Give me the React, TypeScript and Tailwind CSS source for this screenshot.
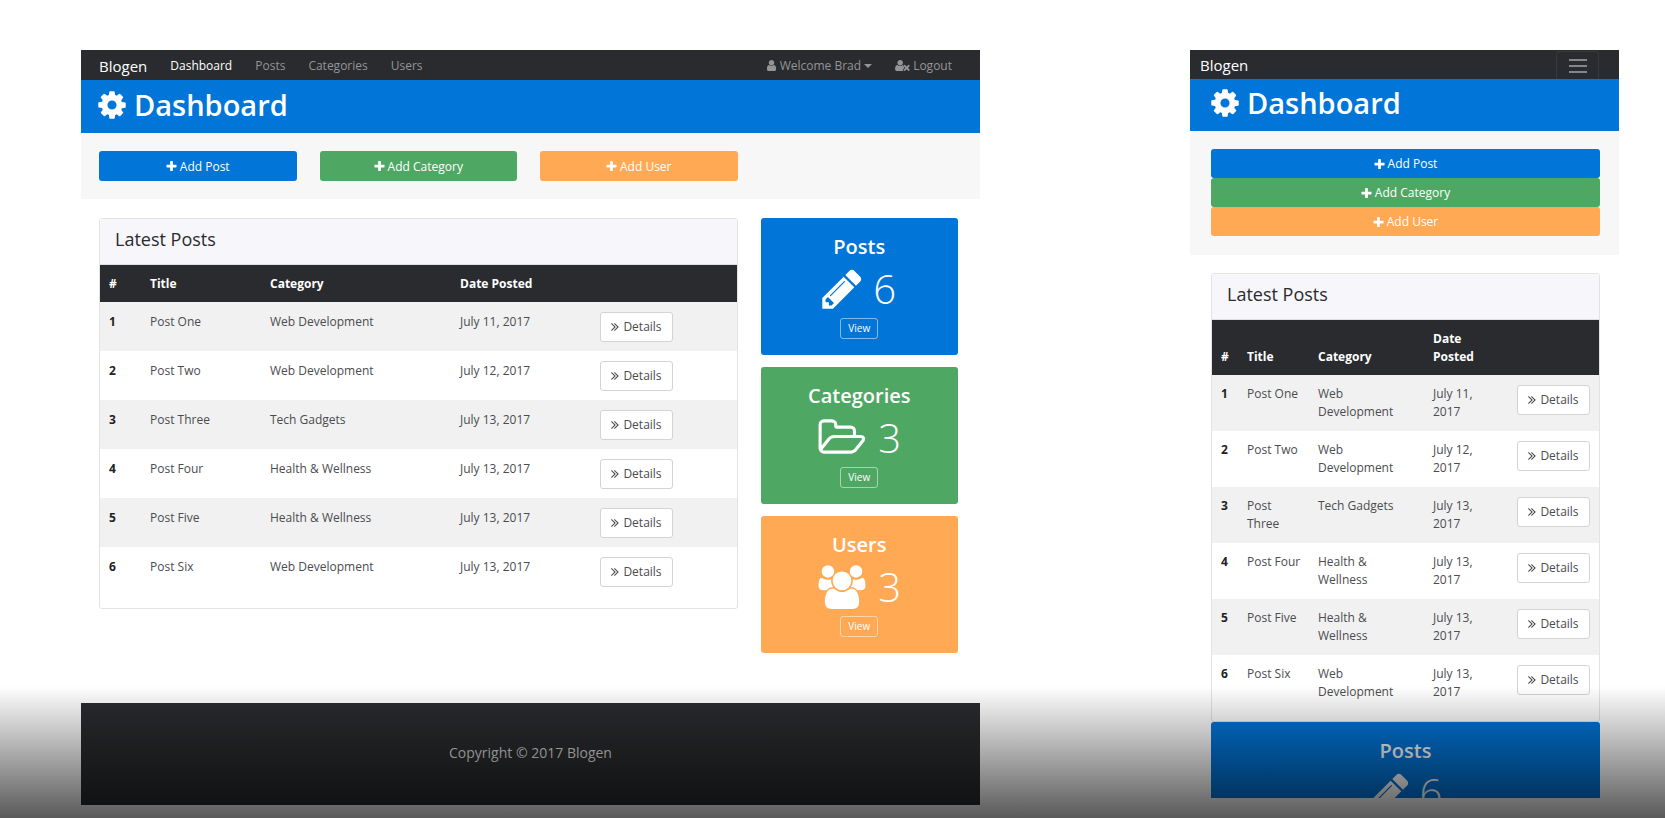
import type { ReactNode } from "react";

const paths = {
  cog: "M1152 896q0-106-75-181t-181-75-181 75-75 181 75 181 181 75 181-75 75-181zm512-109v222q0 12-8 23t-20 13l-185 28q-19 54-39 91 35 50 107 138 10 12 10 25t-9 23q-27 37-99 108t-94 71q-12 0-26-9l-138-108q-44 23-91 38-16 136-29 186-7 28-36 28h-222q-14 0-24.5-8.5t-11.5-21.5l-28-184q-49-16-90-37l-141 107q-10 9-25 9-14 0-25-11-126-114-165-168-7-10-7-23 0-12 8-23 15-21 51-66.5t54-70.5q-27-50-41-99l-183-27q-13-2-21-12.5t-8-23.5v-222q0-12 8-23t19-13l186-28q14-46 39-92-40-57-107-138-10-12-10-24 0-10 9-23 26-36 98.5-107.5t94.5-71.5q13 0 26 10l138 107q44-23 91-38 16-136 29-186 7-28 36-28h222q14 0 24.5 8.5t11.5 21.5l28 184q49 16 90 37l142-107q9-9 24-9 13 0 25 10 129 119 165 170 7 8 7 22 0 12-8 23-15 21-51 66.5t-54 70.5q26 50 41 98l183 28q13 2 21 12.5t8 23.5z",
  plus: "M1600 736v192q0 40-28 68t-68 28h-416v416q0 40-28 68t-68 28h-192q-40 0-68-28t-28-68v-416h-416q-40 0-68-28t-28-68v-192q0-40 28-68t68-28h416v-416q0-40 28-68t68-28h192q40 0 68 28t28 68v416h416q40 0 68 28t28 68z",
  user: "M1536 1399q0 109-62.5 187t-150.5 78h-854q-88 0-150.5-78t-62.5-187q0-85 8.5-160.5t31.5-152 58.5-131 94-89 134.5-34.5q131 128 313 128t313-128q76 0 134.5 34.5t94 89 58.5 131 31.5 152 8.5 160.5zm-256-887q0 159-112.5 271.5t-271.5 112.5-271.5-112.5-112.5-271.5 112.5-271.5 271.5-112.5 271.5 112.5 112.5 271.5z",
  userTimes: "M704 896q-159 0-271.5-112.5t-112.5-271.5 112.5-271.5 271.5-112.5 271.5 112.5 112.5 271.5-112.5 271.5-271.5 112.5zm1077 320l249 249q9 9 9 23 0 13-9 22l-136 136q-9 9-22 9-14 0-23-9l-249-249-249 249q-9 9-23 9-13 0-22-9l-136-136q-9-9-9-22 0-14 9-23l249-249-249-249q-9-9-9-23 0-13 9-22l136-136q9-9 22-9 14 0 23 9l249 249 249-249q9-9 23-9 13 0 22 9l136 136q9 9 9 22 0 14-9 23zm-498 0l-181 181q-37 37-37 91 0 53 37 90l83 83q-21 3-44 3h-874q-121 0-194-69t-73-190q0-53 3.5-103.5t14-109 26.5-108.5 43-97.5 62-81 85.5-53.5 111.5-20q19 0 39 17 79 61 154.5 91.5t164.5 30.5 164.5-30.5 154.5-91.5q20-17 39-17 60 0 110 20-37 37-37 90 0 54 37 91z",
  angles: "M979 960q0 13-10 23l-466 466q-10 10-23 10t-23-10l-50-50q-10-10-10-23t10-23l393-393-393-393q-10-10-10-23t10-23l50-50q10-10 23-10t23 10l466 466q10 10 10 23zm384 0q0 13-10 23l-466 466q-10 10-23 10t-23-10l-50-50q-10-10-10-23t10-23l393-393-393-393q-10-10-10-23t10-23l50-50q10-10 23-10t23 10l466 466q10 10 10 23z",
  pencil: "M491 1536l91-91-235-235-91 91v107h128v128h107zm523-928q0-22-22-22-10 0-17 7l-542 542q-7 7-7 17 0 22 22 22 10 0 17-7l542-542q7-7 7-17zm-54-192l416 416-832 832h-416v-416zm683 96q0 53-37 90l-166 166-416-416 166-165q36-38 90-38 53 0 91 38l235 234q37 39 37 91z",
  folder: "M1845 931q0-35-53-35h-1088q-40 0-85.5 21.5t-71.5 52.5l-294 363q-18 24-18 40 0 35 53 35h1088q40 0 86-22t71-53l294-363q18-22 18-39zm-1141-163h768v-160q0-40-28-68t-68-28h-576q-40 0-68-28t-28-68v-64q0-40-28-68t-68-28h-320q-40 0-68 28t-28 68v853l256-315q44-53 116-87.5t140-34.5zm1269 163q0 62-46 120l-295 363q-43 53-116 87.5t-140 34.5h-1088q-92 0-158-66t-66-158v-960q0-92 66-158t158-66h320q92 0 158 66t66 158v32h544q92 0 158 66t66 158v160h192q54 0 99 24.5t67 70.5q15 32 15 68z",
  users: "M657 896q-162 5-265 128h-134q-82 0-138-40.5t-56-118.5q0-353 124-353 6 0 43.5 21t97.5 42.5 119 21.5q67 0 133-23-5 37-5 66 0 139 81 256zm1071 637q0 120-73 189.5t-194 69.5h-874q-121 0-194-69.5t-73-189.5q0-53 3.5-103.5t14-109 26.5-108.5 43-97.5 62-81 85.5-53.5 111.5-20q10 0 43 21.5t73 48 107 48 135 21.5 135-21.5 107-48 73-48 43-21.5q61 0 111.5 20t85.5 53.5 62 81 43 97.5 26.5 108.5 14 109 3.5 103.5zm-1024-1277q0 106-75 181t-181 75-181-75-75-181 75-181 181-75 181 75 75 181zm704 384q0 159-112.5 271.5t-271.5 112.5-271.5-112.5-112.5-271.5 112.5-271.5 271.5-112.5 271.5 112.5 112.5 271.5zm576 225q0 78-56 118.5t-138 40.5h-134q-103-123-265-128 81-117 81-256 0-29-5-66 66 23 133 23 59 0 119-21.5t97.5-42.5 43.5-21q124 0 124 353zm-128-609q0 106-75 181t-181 75-181-75-75-181 75-181 181-75 181 75 75 181z",
};

function Icon({ name, box = "128 0 1536 1792", className }: { name: keyof typeof paths; box?: string; className: string }) {
  return (
    <svg viewBox={box} fill="currentColor" aria-hidden="true" className={className}>
      <path d={paths[name]} />
    </svg>
  );
}

const posts = [
  ["Post One", "Web Development", "July 11, 2017"],
  ["Post Two", "Web Development", "July 12, 2017"],
  ["Post Three", "Tech Gadgets", "July 13, 2017"],
  ["Post Four", "Health & Wellness", "July 13, 2017"],
  ["Post Five", "Health & Wellness", "July 13, 2017"],
  ["Post Six", "Web Development", "July 13, 2017"],
];

function Heading({ className }: { className: string }) {
  return (
    <header className={`flex items-start bg-[#0275d8] text-white ${className}`}>
      <h1 className="flex items-center gap-2 text-[29px] leading-10 font-semibold">
        <Icon name="cog" className="h-8 w-7" />
        Dashboard
      </h1>
    </header>
  );
}

function AddButtons({ className }: { className: string }) {
  const base = "flex items-center justify-center gap-[3px] rounded-[3px] pt-px text-xs text-white";
  return (
    <section className={className}>
      <button type="button" className={`${base} bg-[#0275d8]`}>
        <Icon name="plus" className="h-[13px] w-[11px]" />Add Post
      </button>
      <button type="button" className={`${base} bg-[#4fa764]`}>
        <Icon name="plus" className="h-[13px] w-[11px]" />Add Category
      </button>
      <button type="button" className={`${base} bg-[#ffa954]`}>
        <Icon name="plus" className="h-[13px] w-[11px]" />Add User
      </button>
    </section>
  );
}

function PostsCard({ compact = false }: { compact?: boolean }) {
  const cell = compact ? "py-[10px] pl-[9px] align-top" : "py-[11px] pl-[9px] align-top";
  return (
    <section className={`rounded-[3px] border border-[#e3e3e5] ${compact ? "pb-[10px]" : "pb-3"}`}>
      <h2 className="border-b border-[#dfdfe1] bg-[#f7f6fb] px-[15px] pt-[6px] pb-[11px] text-lg leading-7 font-medium text-[#292b2c]">
        Latest Posts
      </h2>
      <table className="w-full table-fixed text-left text-xs leading-[18px] text-[#4a4c4e]">
        <colgroup>
          <col className={compact ? "w-[26px]" : "w-[41px]"} />
          <col className={compact ? "w-[71px]" : "w-[120px]"} />
          <col className={compact ? "w-[115px]" : "w-[190px]"} />
          <col className={compact ? "w-[83px]" : "w-[140px]"} />
          <col />
        </colgroup>
        <thead className="bg-[#292b2e] text-white">
          <tr className={compact ? "h-[55px]" : "h-[37px]"}>
            {["#", "Title", "Category", "Date Posted"].map((h) => (
              <th key={h} scope="col" className="py-[9px] pr-1 pl-[9px] align-bottom font-bold">{h}</th>
            ))}
            <td />
          </tr>
        </thead>
        <tbody>
          {posts.map(([title, category, date], i) => (
            <tr key={title} className={compact ? "h-14 odd:bg-[#f1f1f2]" : "h-[49px] odd:bg-[#f1f1f2]"}>
              <th scope="row" className={`${cell} font-bold text-[#222]`}>{i + 1}</th>
              <td className={`${cell} pr-[5px]`}>{title}</td>
              <td className={`${cell} pr-[9px]`}>{category}</td>
              <td className={`${cell} pr-[9px]`}>{date}</td>
              <td className="px-[9px] pt-[10px] align-top">
                <button type="button" className={`flex h-[30px] w-[73px] items-center justify-center gap-1 rounded-[3px] border border-[#d3d3d5] bg-white text-xs whitespace-nowrap ${compact ? "ml-auto" : ""}`}>
                  <Icon name="angles" box="384 256 1024 1408" className="h-3 w-2" />
                  Details
                </button>
              </td>
            </tr>
          ))}
        </tbody>
      </table>
    </section>
  );
}

function StatCard({ title, count, color, icon }: { title: string; count: number; color: string; icon: ReactNode }) {
  return (
    <section className={`flex h-[137px] shrink-0 flex-col items-center rounded-[3px] pt-[17px] text-white ${color}`}>
      <h3 className="text-xl leading-6 font-semibold">{title}</h3>
      <p className="flex h-[59px] items-center gap-[11px] text-[40px] leading-[59px] font-light">
        {icon}
        {count}
      </p>
      <a href="#view" className="rounded-[3px] border border-white/50 px-[7px] text-[10px] leading-[19px] font-medium">View</a>
    </section>
  );
}

const pencil = <Icon name="pencil" className="h-[46px] w-10" />;
const folder = <Icon name="folder" box="0 0 2048 1792" className="h-11 w-[50px]" />;
const people = <Icon name="users" box="0 0 2048 1792" className="h-11 w-[50px]" />;

export default function App() {
  return (
    <main className="relative h-screen overflow-hidden bg-white font-['Open_Sans','Noto_Sans',sans-serif]">
      <div className="grid grid-cols-[899fr_429fr] items-start gap-[210px] pt-[50px] pr-[46px] pl-[81px]">
        <div>
          <nav className="flex h-[30px] items-center bg-[#292b2e] pt-px pr-7 pl-[18px] text-xs text-[#949597]">
            <a href="#home" className="mr-[23px] text-[15px] text-white">Blogen</a>
            <div className="flex gap-[23px]">
              <a href="#dashboard" className="text-white">Dashboard</a>
              <a href="#posts">Posts</a>
              <a href="#categories">Categories</a>
              <a href="#users">Users</a>
            </div>
            <div className="ml-auto flex gap-[23px]">
              <button type="button" className="flex items-center gap-[3px]">
                <Icon name="user" className="h-[13px] w-[11px]" />
                Welcome Brad
                <span className="border-x-4 border-t-4 border-x-transparent border-t-current" />
              </button>
              <a href="#logout" className="flex items-center gap-[3px]">
                <Icon name="userTimes" box="0 0 2048 1792" className="h-[13px] w-[15px]" />
                Logout
              </a>
            </div>
          </nav>
          <Heading className="h-[53px] pt-[5px] pl-[17px]" />
          <AddButtons className="grid h-[66px] grid-cols-4 grid-rows-[30px] gap-x-[23px] bg-[#f7f7f7] pt-[18px] pr-[22px] pl-[18px]" />
          <div className="mt-[19px] grid grid-cols-4 items-start gap-x-[23px] pr-[22px] pl-[18px]">
            <div className="col-span-3"><PostsCard /></div>
            <div className="flex flex-col gap-3">
              <StatCard title="Posts" count={6} color="bg-[#0275d8]" icon={pencil} />
              <StatCard title="Categories" count={3} color="bg-[#4fa764]" icon={folder} />
              <StatCard title="Users" count={3} color="bg-[#ffa954]" icon={people} />
            </div>
          </div>
          <footer className="mt-[50px] flex h-[102px] items-center justify-center bg-[#292b2e] pb-1 text-[14px] text-[#d8d8d8]">
            Copyright © 2017 Blogen
          </footer>
        </div>

        <div className="h-[748px] overflow-hidden">
          <nav className="flex h-[29px] items-center justify-between bg-[#292b2e] pt-px pr-5 pl-[10px]">
            <a href="#home" className="text-[15px] text-white">Blogen</a>
            <button type="button" aria-label="Toggle navigation" className="flex h-[28px] w-[43px] flex-col items-center justify-center gap-1 self-end rounded-t-[3px] border border-b-0 border-[#38393c]">
              <span className="h-[2px] w-[18px] bg-[#858688]" />
              <span className="h-[2px] w-[18px] bg-[#858688]" />
              <span className="h-[2px] w-[18px] bg-[#858688]" />
            </button>
          </nav>
          <Heading className="h-[52px] pt-1 pl-[21px]" />
          <AddButtons className="grid h-[124px] auto-rows-[29px] bg-[#f7f7f7] pt-[18px] pr-[19px] pl-[21px]" />
          <div className="mt-[18px] flex flex-col pr-[19px] pl-[21px]">
            <PostsCard compact />
            <StatCard title="Posts" count={6} color="bg-[#0275d8]" icon={pencil} />
          </div>
        </div>
      </div>
      <div className="pointer-events-none absolute inset-x-0 bottom-0 h-[132px] bg-linear-to-b from-black/0 to-black/65" />
    </main>
  );
}
